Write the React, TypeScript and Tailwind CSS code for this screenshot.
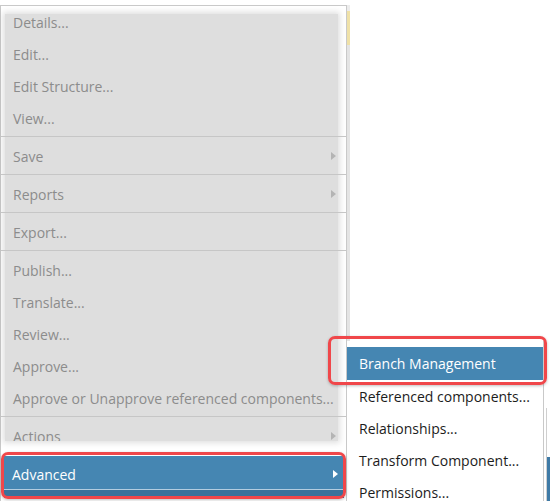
import React from "react";

type Item = { label: string; sub?: boolean };

// greyed-out part of the context menu, split where separators go
const GROUPS: Item[][] = [
  [{ label: "Details..." }, { label: "Edit..." }, { label: "Edit Structure..." }, { label: "View..." }],
  [{ label: "Save", sub: true }],
  [{ label: "Reports", sub: true }],
  [{ label: "Export..." }],
  [
    { label: "Publish..." },
    { label: "Translate..." },
    { label: "Review..." },
    { label: "Approve..." },
    { label: "Approve or Unapprove referenced components..." },
  ],
  [{ label: "Actions", sub: true }],
];

const SUBMENU = ["Referenced components...", "Relationships...", "Transform Component...", "Permissions..."];

function Arrow({ color }: { color: string }) {
  return (
    <svg width="5" height="8" viewBox="0 0 5 8" className="shrink-0">
      <path d="M0 0L5 4L0 8Z" fill={color} />
    </svg>
  );
}

export default function App() {
  return (
    <div
      className="relative w-[550px] h-[501px] overflow-hidden bg-white text-[14px]"
      style={{ fontFamily: '"Open Sans", "Noto Sans", sans-serif' }}
    >
      <div className="flex items-start">
        {/* main menu */}
        <div className="w-[347px] h-[520px] mt-[5px] bg-white border-l border-t border-r border-[#c9c9c9] shrink-0">
          <div className="flow-root ml-[4px] mt-[8px] w-[333px] h-[427px] bg-[#dedede] shadow-[0_0_6px_2px_rgba(0,0,0,0.13)] overflow-y-clip">
            <div className="-mt-[8px]">
              {GROUPS.map((group, gi) => (
                <div key={gi}>
                  {gi > 0 && <div className="-ml-[4px] w-[345px] h-px bg-[#c6c6c6] mt-[2px] mb-[3px]" />}
                  {group.map((it) => (
                    <div key={it.label} className="h-[32px] flex items-center justify-between pl-[8px] pr-[2px] text-[#8c8c8c]">
                      <span>{it.label}</span>
                      {it.sub && <Arrow color="#b4b4b4" />}
                    </div>
                  ))}
                </div>
              ))}
            </div>
          </div>

          <div className="mt-[15px] ml-[3px] mr-[2px]">
            <div className="h-[33px] pt-[3px] bg-[#4586b2] flex items-center justify-between pl-[8px] pr-[6px] text-white">
              <span>Advanced</span>
              <Arrow color="#ffffff" />
            </div>
            <div className="h-px bg-[#b3cde0]" />
            <div className="h-[8px] bg-[#3a729b]" />
          </div>
        </div>

        {/* sliver of the page behind */}
        <div className="w-[3px] mt-[5px] shrink-0">
          <div className="h-[6px] bg-[#ececec]" />
          <div className="h-[34px] bg-[#efe1a8]" />
          <div className="h-[300px] bg-[#e4e4e4]" />
        </div>

        <div className="flex-1" />

        <div className="w-[4px] shrink-0 flex flex-col">
          <div className="h-[408px]" />
          <div className="h-[49px] border-l border-[#cfcfcf]" />
          <div className="h-[44px] border-l border-[#cfcfcf] bg-[#3f7aa6]" />
        </div>
      </div>

      {/* submenu */}
      <div className="absolute left-[347px] top-[341px] w-[197px] h-[170px] bg-white border-r border-[#c9c9c9] pt-[6px]">
        <div className="h-[33px] bg-[#4586b2] flex items-center pl-[12px] text-white">Branch Management</div>
        {SUBMENU.map((s) => (
          <div key={s} className="h-[32px] flex items-center pl-[12px] text-[#1c1c1c]">
            {s}
          </div>
        ))}
      </div>

      {/* annotation outlines */}
      <div className="absolute left-[328px] top-[336px] w-[219px] h-[49px] border-[3px] border-[#f0474a] rounded-[7px] shadow-[0_1px_3px_rgba(0,0,0,0.25)] pointer-events-none" />
      <div className="absolute left-[1px] top-[452px] w-[345px] h-[47px] border-[3px] border-[#f0474a] rounded-[7px] shadow-[0_1px_3px_rgba(0,0,0,0.25)] pointer-events-none" />
    </div>
  );
}
